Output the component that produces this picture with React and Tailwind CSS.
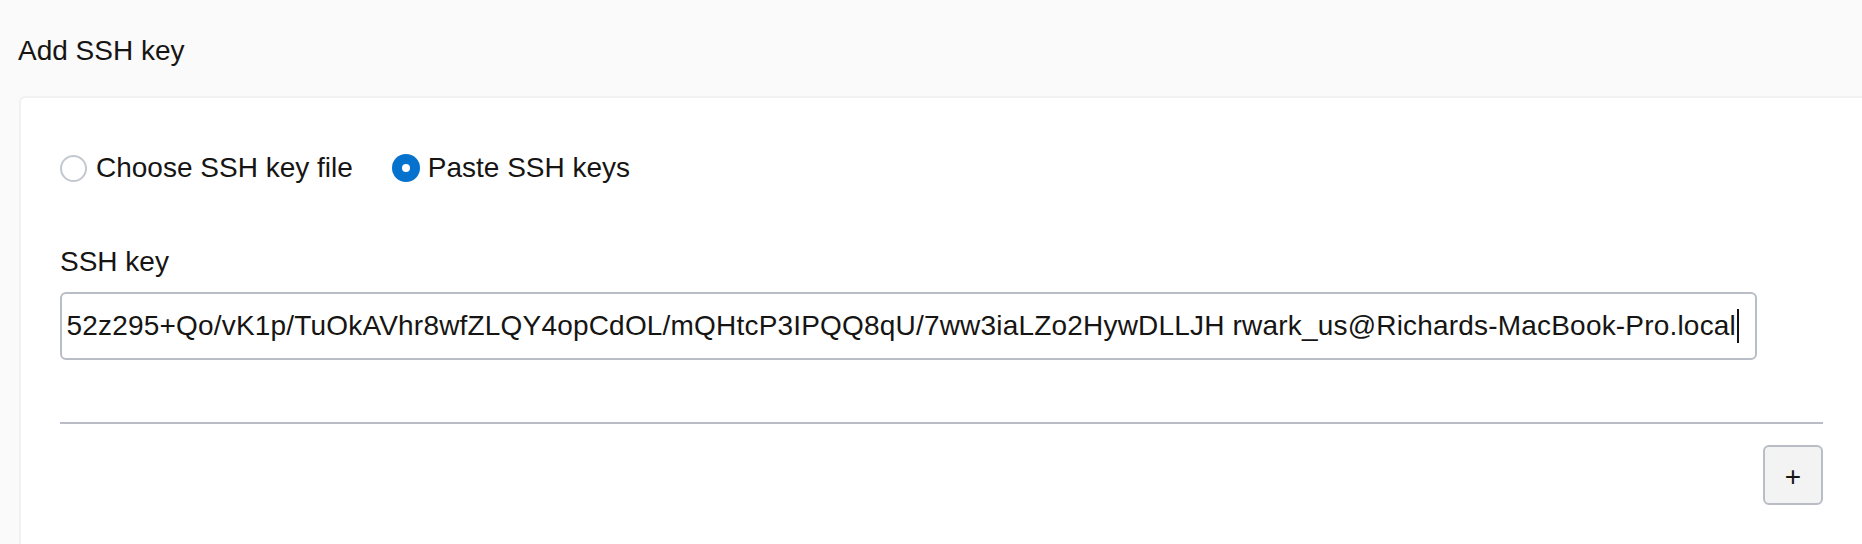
import React from 'react';

export default function App() {
  const keyText =
    '52z295+Qo/vK1p/TuOkAVhr8wfZLQY4opCdOL/mQHtcP3IPQQ8qU/7ww3iaLZo2HywDLLJH rwark_us@Richards-MacBook-Pro.local';

  return (
    <div className="h-[544px] overflow-hidden bg-[#fafafa] text-[#161513] font-['Liberation_Sans',Arial,sans-serif]">
      {/* Header */}
      <div className="pl-[18px] pt-[31px] text-[28px] leading-[40px]">Add SSH key</div>

      {/* Card */}
      <div className="ml-[19px] mt-[25px] min-h-[460px] bg-white border-2 border-r-0 border-b-0 border-[#f1f1f1] rounded-tl-[6px] pl-[39px] pr-[39px] pt-[56px]">
        {/* Radio group */}
        <div className="flex h-[28px] items-center text-[28px] leading-[28px]">
          <span className="w-[27px] h-[27px] rounded-full border-2 border-[#c3c8d0] bg-white"></span>
          <span className="ml-[9px]">Choose SSH key file</span>
          <span className="ml-[39px] w-[28px] h-[28px] rounded-full bg-[#0572ce] flex items-center justify-center">
            <span className="w-[8px] h-[8px] rounded-full bg-white"></span>
          </span>
          <span className="ml-[8px]">Paste SSH keys</span>
        </div>

        {/* SSH key field */}
        <div className="mt-[66px] text-[28px] leading-[28px]">SSH key</div>
        <div className="mt-[16px] mr-[66px] h-[68px] border-2 border-[#b9bdc5] rounded-[6px] pr-[16px] flex items-center justify-end overflow-hidden">
          <div className="flex items-center whitespace-nowrap text-[28px] leading-[28px] tracking-[0.19px]">
            <span>{keyText}</span>
            <span className="ml-[1px] w-[2px] h-[34px] bg-[#161513]"></span>
          </div>
        </div>

        {/* Divider */}
        <div className="mt-[62px] h-[2px] bg-[#b9bcc4]"></div>

        {/* Add button */}
        <div className="mt-[21px] flex justify-end">
          <button className="w-[60px] h-[60px] border-2 border-[#b9bdc5] rounded-[6px] bg-[#f3f3f3] text-[28px] leading-[28px] text-[#161513] flex items-center justify-center pt-[4px]">
            +
          </button>
        </div>
      </div>
    </div>
  );
}
